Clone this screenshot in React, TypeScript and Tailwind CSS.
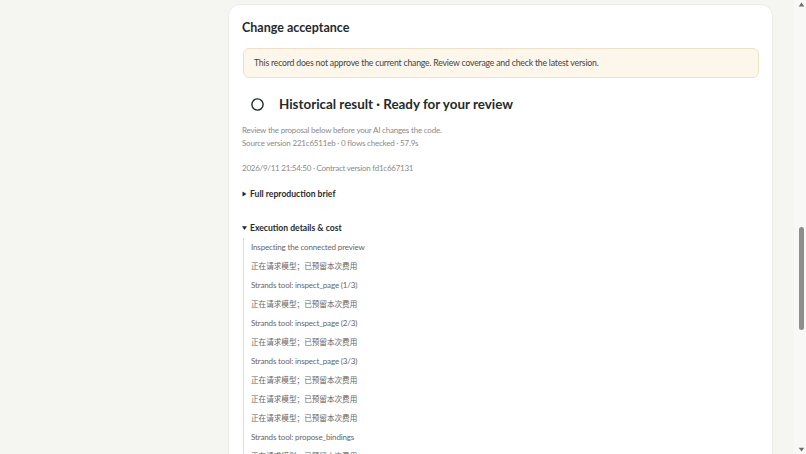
import React from 'react';

const steps: string[] = [
  'Inspecting the connected preview',
  '正在请求模型；已预留本次费用',
  'Strands tool: inspect_page (1/3)',
  '正在请求模型；已预留本次费用',
  'Strands tool: inspect_page (2/3)',
  '正在请求模型；已预留本次费用',
  'Strands tool: inspect_page (3/3)',
  '正在请求模型；已预留本次费用',
  '正在请求模型；已预留本次费用',
  '正在请求模型；已预留本次费用',
  'Strands tool: propose_bindings',
  '正在请求模型；已预留本次费用',
  'Strands tool: propose_bindings',
  '正在请求模型；已预留本次费用',
];

const isCjk = (s: string) => /[\u4e00-\u9fff]/.test(s);

const Caret: React.FC<{ open?: boolean }> = ({ open }) => (
  <svg width="5" height="6" viewBox="0 0 5 6" className="shrink-0 fill-[#1f2b2b]">
    {open ? <path d="M0 1.2h5L2.5 5z" /> : <path d="M0.5 0.5l4 2.5-4 2.5z" />}
  </svg>
);

// the window's scrollbar, scrolled about halfway down the page
const ScrollBar: React.FC = () => (
  <div className="w-[12px] shrink-0 bg-[#f8f8f7] flex flex-col">
    <svg width="12" height="10" viewBox="0 0 12 10" className="shrink-0 fill-[#6e6e6e]">
      <path d="M7.5 2.6l2.8 3.8H4.7z" />
    </svg>
    <div className="flex-1">
      <div className="mt-[217px] ml-[5px] h-[103px] w-[5px] rounded-full bg-[#8e8e8e]" />
    </div>
    <svg width="12" height="10" viewBox="0 0 12 10" className="shrink-0 fill-[#6e6e6e]">
      <path d="M7.5 7.6l2.8-3.8H4.7z" />
    </svg>
  </div>
);

const App: React.FC = () => {
  return (
    <div
      className="h-screen flex bg-[#f5f5f2] text-[#1f2b2b]"
      style={{ fontFamily: 'Lato, "Noto Sans CJK SC", sans-serif' }}
    >
      <div className="flex-1 overflow-hidden">
        <div className="flex pl-[18px] pr-[21px] pt-[4px] pb-8">
          {/* left column, empty at this point of the page */}
          <aside className="w-[210px] shrink-0" />

          <main className="flex-1">
            <section className="rounded-[12px] bg-white border border-[#ecebe6] px-[13px] pt-[13px] pb-6">
              <h2 className="text-[12.5px] leading-[20px] font-bold">Change acceptance</h2>

              {/* warning */}
              <div className="mt-[10px] ml-[1px] h-[30px] flex items-center rounded-[6px] border border-[#f1e2c6] bg-[#fdf6ea] px-[10px]">
                <p className="text-[8.7px] tracking-[-0.2px] text-[#444]">
                  This record does not approve the current change. Review coverage and check the latest version.
                </p>
              </div>

              {/* status heading */}
              <div className="mt-[16px] h-[20px] flex items-center pl-[9px]">
                <svg width="13" height="13" viewBox="0 0 13 13" className="shrink-0">
                  <circle cx="6.5" cy="6.5" r="5.6" fill="none" stroke="#1f2b2b" strokeWidth="1.4" />
                </svg>
                <h3 className="ml-[15px] text-[13.4px] font-bold">
                  Historical result · Ready for your review
                </h3>
              </div>

              <div className="mt-[10px] text-[8px] leading-[13px] tracking-[-0.2px] text-[#8a8a8a]">
                <p>Review the proposal below before your AI changes the code.</p>
                <p>Source version 221c6511eb · 0 flows checked · 57.9s</p>
              </div>

              <p className="mt-[12px] text-[8px] leading-[13px] tracking-[-0.25px] text-[#8a8a8a]">
                2026/9/11 21:54:50 · Contract version fd1c667131
              </p>

              <div className="mt-[12px] h-[14px] flex items-center gap-[3px] text-[8.6px] font-bold">
                <Caret />
                <span>Full reproduction brief</span>
              </div>

              <div className="mt-[20px] h-[14px] flex items-center gap-[3px] text-[8.6px] font-bold">
                <Caret open />
                <span>Execution details &amp; cost</span>
              </div>

              <ul className="mt-[3px] ml-[1px] border-l border-[#dcdcdc] pl-[7px]">
                {steps.map((s, i) => (
                  <li
                    key={i}
                    className={
                      isCjk(s)
                        ? 'h-[19px] flex items-center text-[7.6px] text-[#666]'
                        : 'h-[19px] flex items-center pb-[1px] text-[8px] tracking-[-0.15px] text-[#666]'
                    }
                  >
                    {s}
                  </li>
                ))}
              </ul>
            </section>
          </main>
        </div>
      </div>
      <ScrollBar />
    </div>
  );
};

export default App;
